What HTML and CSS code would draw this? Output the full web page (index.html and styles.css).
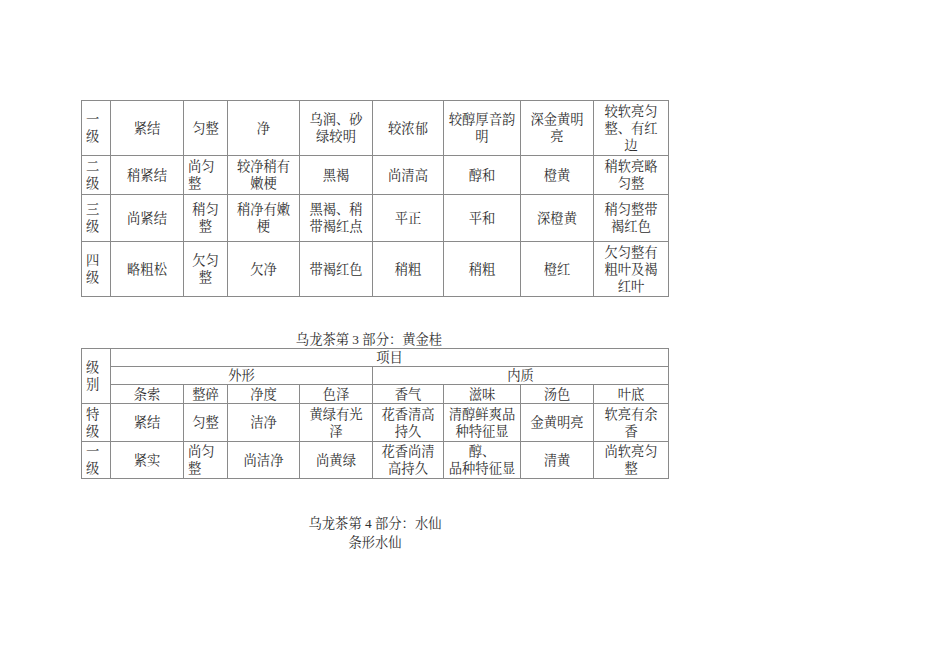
FILE: index.html
```html
<!DOCTYPE html>
<html lang="zh">
<head>
<meta charset="utf-8">
<title>乌龙茶</title>
<link rel="stylesheet" href="styles.css">
</head>
<body>
<div class="page">
  <table class="grid t1">
    <colgroup>
      <col class="c1"><col class="c2"><col class="c3"><col class="c4"><col class="c5"><col class="c6"><col class="c7"><col class="c8"><col class="c9">
    </colgroup>
    <tr class="r55">
      <td class="lv">一<br>级</td><td>紧结</td><td>匀整</td><td>净</td><td>乌润、砂<br>绿较明</td><td>较浓郁</td><td>较醇厚音韵<br>明</td><td>深金黄明<br>亮</td><td>较软亮匀<br>整、有红<br>边</td>
    </tr>
    <tr class="r39">
      <td class="lv">二<br>级</td><td>稍紧结</td><td class="left">尚匀<br>整</td><td>较净稍有<br>嫩梗</td><td>黑褐</td><td>尚清高</td><td>醇和</td><td>橙黄</td><td>稍软亮略<br>匀整</td>
    </tr>
    <tr class="r47">
      <td class="lv">三<br>级</td><td>尚紧结</td><td>稍匀<br>整</td><td>稍净有嫩<br>梗</td><td>黑褐、稍<br>带褐红点</td><td>平正</td><td>平和</td><td>深橙黄</td><td>稍匀整带<br>褐红色</td>
    </tr>
    <tr class="r55">
      <td class="lv">四<br>级</td><td>略粗松</td><td>欠匀<br>整</td><td>欠净</td><td>带褐红色</td><td>稍粗</td><td>稍粗</td><td>橙红</td><td>欠匀整有<br>粗叶及褐<br>红叶</td>
    </tr>
  </table>

  <p class="caption cap3">乌龙茶第 3 部分：黄金桂</p>

  <table class="grid t2">
    <colgroup>
      <col class="c1"><col class="c2"><col class="c3"><col class="c4"><col class="c5"><col class="c6"><col class="c7"><col class="c8"><col class="c9">
    </colgroup>
    <tr class="r18">
      <td class="lv" rowspan="3">级<br>别</td><td colspan="8">项目</td>
    </tr>
    <tr class="r18">
      <td colspan="4">外形</td><td colspan="4">内质</td>
    </tr>
    <tr class="r19">
      <td>条索</td><td>整碎</td><td>净度</td><td>色泽</td><td>香气</td><td>滋味</td><td>汤色</td><td>叶底</td>
    </tr>
    <tr class="r38">
      <td class="lv">特<br>级</td><td>紧结</td><td>匀整</td><td>洁净</td><td>黄绿有光<br>泽</td><td>花香清高<br>持久</td><td>清醇鲜爽品<br>种特征显</td><td>金黄明亮</td><td>软亮有余<br>香</td>
    </tr>
    <tr class="r37">
      <td class="lv">一<br>级</td><td>紧实</td><td class="left">尚匀<br>整</td><td>尚洁净</td><td>尚黄绿</td><td>花香尚清<br>高持久</td><td>醇、<br>品种特征显</td><td>清黄</td><td>尚软亮匀<br>整</td>
    </tr>
  </table>

  <div class="section4">
    <p class="caption">乌龙茶第 4 部分：水仙</p>
    <p class="caption">条形水仙</p>
  </div>
</div>
</body>
</html>
```

FILE: styles.css
```css
html, body {
  margin: 0;
  padding: 0;
  background: #ffffff;
}

body {
  font-family: "Liberation Serif", "Noto Serif CJK SC", "Noto Sans CJK SC", serif;
  font-size: 13.3px;
  line-height: 17px;
  color: #2e2e2e;
}

.page {
  padding: 100px 0 0 81px;
  width: 600px;
}

.grid {
  border-collapse: collapse;
  table-layout: fixed;
  width: 588px;
}

.grid td {
  border: 1px solid #8a8a8a;
  padding: 0 4px;
  text-align: center;
  vertical-align: middle;
  white-space: nowrap;
  overflow: hidden;
}

.grid td.lv,
.grid td.left {
  text-align: left;
}

.c1 { width: 29px; }
.c2 { width: 73px; }
.c3 { width: 44px; }
.c4 { width: 72px; }
.c5 { width: 73px; }
.c6 { width: 71px; }
.c7 { width: 77px; }
.c8 { width: 73px; }
.c9 { width: 75px; }

.r55 { height: 55px; }
.r39 { height: 39px; }
.r47 { height: 47px; }
.r18 { height: 18px; }
.r19 { height: 19px; }
.r38 { height: 38px; }
.r37 { height: 37px; }

.caption {
  margin: 0;
  text-align: center;
  width: 588px;
}

.cap3 {
  margin-top: 35px;
  padding-right: 12px;
  box-sizing: border-box;
  line-height: 16px;
}

.section4 {
  margin-top: 35px;
}

.section4 .caption {
  line-height: 19px;
}
```
